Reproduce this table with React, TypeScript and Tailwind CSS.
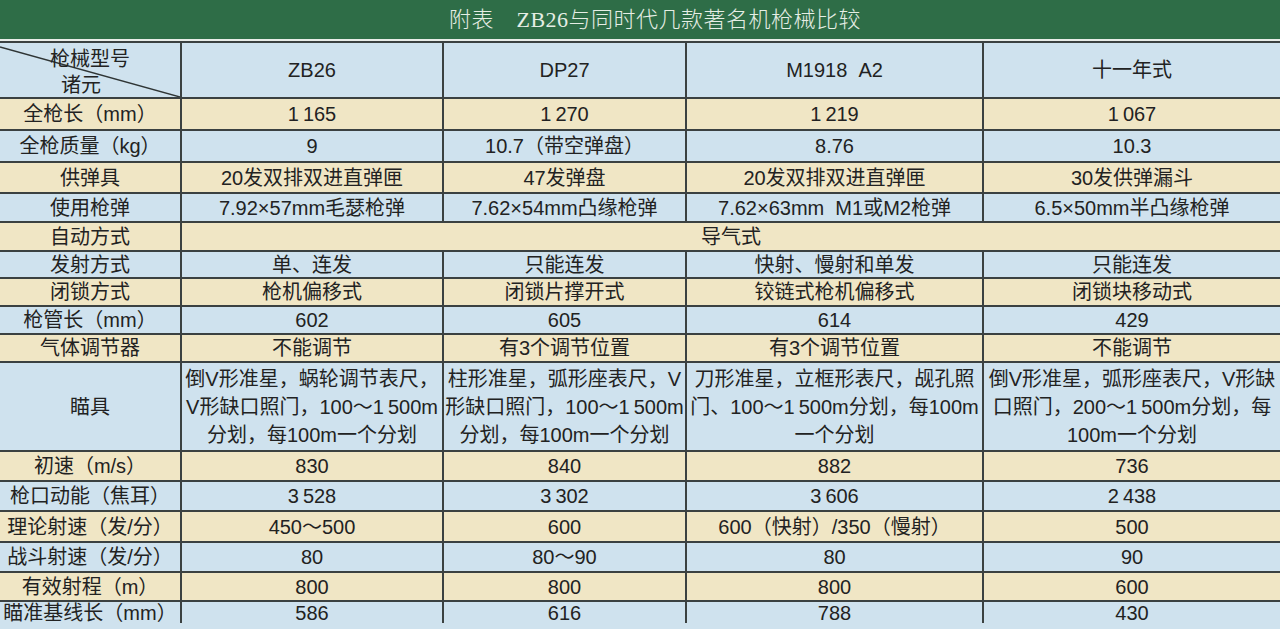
const BLUE = "bg-[#cfe2ee]";
const YELLOW = "bg-[#f0e6c5]";

type RowData = {
  label: string;
  cells: (string | string[])[];
  tone: string;
  h: string;
};

const rows: RowData[] = [
  { label: "全枪长（mm）", cells: ["1\u2009165", "1\u2009270", "1\u2009219", "1\u2009067"], tone: YELLOW, h: "h-[32px]" },
  { label: "全枪质量（kg）", cells: ["9", "10.7（带空弹盘）", "8.76", "10.3"], tone: BLUE, h: "h-[32px]" },
  { label: "供弹具", cells: ["20发双排双进直弹匣", "47发弹盘", "20发双排双进直弹匣", "30发供弹漏斗"], tone: YELLOW, h: "h-[31px]" },
  { label: "使用枪弹", cells: ["7.92×57mm毛瑟枪弹", "7.62×54mm凸缘枪弹", "7.62×63mm\u00a0\u00a0M1或M2枪弹", "6.5×50mm半凸缘枪弹"], tone: BLUE, h: "h-[29px]" },
  { label: "自动方式", cells: ["导气式"], tone: YELLOW, h: "h-[29px]" },
  { label: "发射方式", cells: ["单、连发", "只能连发", "快射、慢射和单发", "只能连发"], tone: BLUE, h: "h-[27px]" },
  { label: "闭锁方式", cells: ["枪机偏移式", "闭锁片撑开式", "铰链式枪机偏移式", "闭锁块移动式"], tone: YELLOW, h: "h-[28px]" },
  { label: "枪管长（mm）", cells: ["602", "605", "614", "429"], tone: BLUE, h: "h-[28px]" },
  { label: "气体调节器", cells: ["不能调节", "有3个调节位置", "有3个调节位置", "不能调节"], tone: YELLOW, h: "h-[28px]" },
  {
    label: "瞄具",
    cells: [
      ["倒V形准星，蜗轮调节表尺，", "V形缺口照门，100～1\u2009500m", "分划，每100m一个分划"],
      ["柱形准星，弧形座表尺，V", "形缺口照门，100～1\u2009500m", "分划，每100m一个分划"],
      ["刀形准星，立框形表尺，觇孔照", "门、100～1\u2009500m分划，每100m", "一个分划"],
      ["倒V形准星，弧形座表尺，V形缺", "口照门，200～1\u2009500m分划，每", "100m一个分划"],
    ],
    tone: BLUE,
    h: "h-[89px]",
  },
  { label: "初速（m/s）", cells: ["830", "840", "882", "736"], tone: YELLOW, h: "h-[30px]" },
  { label: "枪口动能（焦耳）", cells: ["3\u2009528", "3\u2009302", "3\u2009606", "2\u2009438"], tone: BLUE, h: "h-[30px]" },
  { label: "理论射速（发/分）", cells: ["450～500", "600", "600（快射）/350（慢射）", "500"], tone: YELLOW, h: "h-[31px]" },
  { label: "战斗射速（发/分）", cells: ["80", "80～90", "80", "90"], tone: BLUE, h: "h-[30px]" },
  { label: "有效射程（m）", cells: ["800", "800", "800", "600"], tone: YELLOW, h: "h-[29px]" },
];

const last: RowData = { label: "瞄准基线长（mm）", cells: ["586", "616", "788", "430"], tone: BLUE, h: "h-[21px]" };

const GRID = "grid grid-cols-[182px_262px_243px_297px_1fr]";
const CELL = "flex items-center justify-center border-r-2 border-[#3b4141] last:border-r-0 text-center whitespace-nowrap";

function Row({ row, bottom = true }: { row: RowData; bottom?: boolean }) {
  return (
    <div className={`${GRID} ${row.tone} ${row.h} ${bottom ? "border-b-2 border-[#3b4141]" : ""}`}>
      <div className={CELL}>{row.label}</div>
      {row.cells.map((c, i) => (
        <div key={i} className={`${CELL} ${row.cells.length === 1 ? "col-span-4" : ""}`}>
          {Array.isArray(c) ? (
            <div className="flex flex-col leading-[28px]">
              {c.map((line, j) => (
                <span key={j}>{line}</span>
              ))}
            </div>
          ) : (
            c
          )}
        </div>
      ))}
    </div>
  );
}

export default function App() {
  return (
    <div className="w-[1280px] h-[629px] overflow-hidden bg-[#cfe2ee] font-['Liberation_Sans','Noto_Sans_CJK_SC',sans-serif] text-[20px] leading-none text-[#222]">
      {/* title band */}
      <div className="h-[39px] bg-[#2e6d47] flex items-center justify-center pl-[30px]">
        <h1 className="font-['Liberation_Serif','Noto_Sans_CJK_SC',serif] font-light text-[22px] text-[#e6eee5] tracking-[0.5px]">
          附表　ZB26与同时代几款著名机枪械比较
        </h1>
      </div>
      <div className="h-[2px] bg-[#e9ede9]" />

      <div className="border-t-2 border-[#3b4141]">
        {/* header */}
        <div className={`${GRID} ${BLUE} h-[56px] border-b-2 border-[#3b4141]`}>
          <div className={`${CELL} relative`}>
            <svg className="absolute inset-0 w-full h-full" viewBox="0 0 180 54" preserveAspectRatio="none">
              <line x1="0" y1="4" x2="180" y2="54" stroke="#2f3535" strokeWidth="1.4" />
            </svg>
            <div className="relative flex flex-col items-center gap-[6px] pt-[4px]">
              <span>枪械型号</span>
              <span className="mr-[18px]">诸元</span>
            </div>
          </div>
          <div className={CELL}>ZB26</div>
          <div className={CELL}>DP27</div>
          <div className={CELL}>M1918{"\u00a0\u00a0"}A2</div>
          <div className={CELL}>十一年式</div>
        </div>

        {rows.map((r) => (
          <Row key={r.label} row={r} />
        ))}
        <Row row={last} bottom={false} />
      </div>
    </div>
  );
}
